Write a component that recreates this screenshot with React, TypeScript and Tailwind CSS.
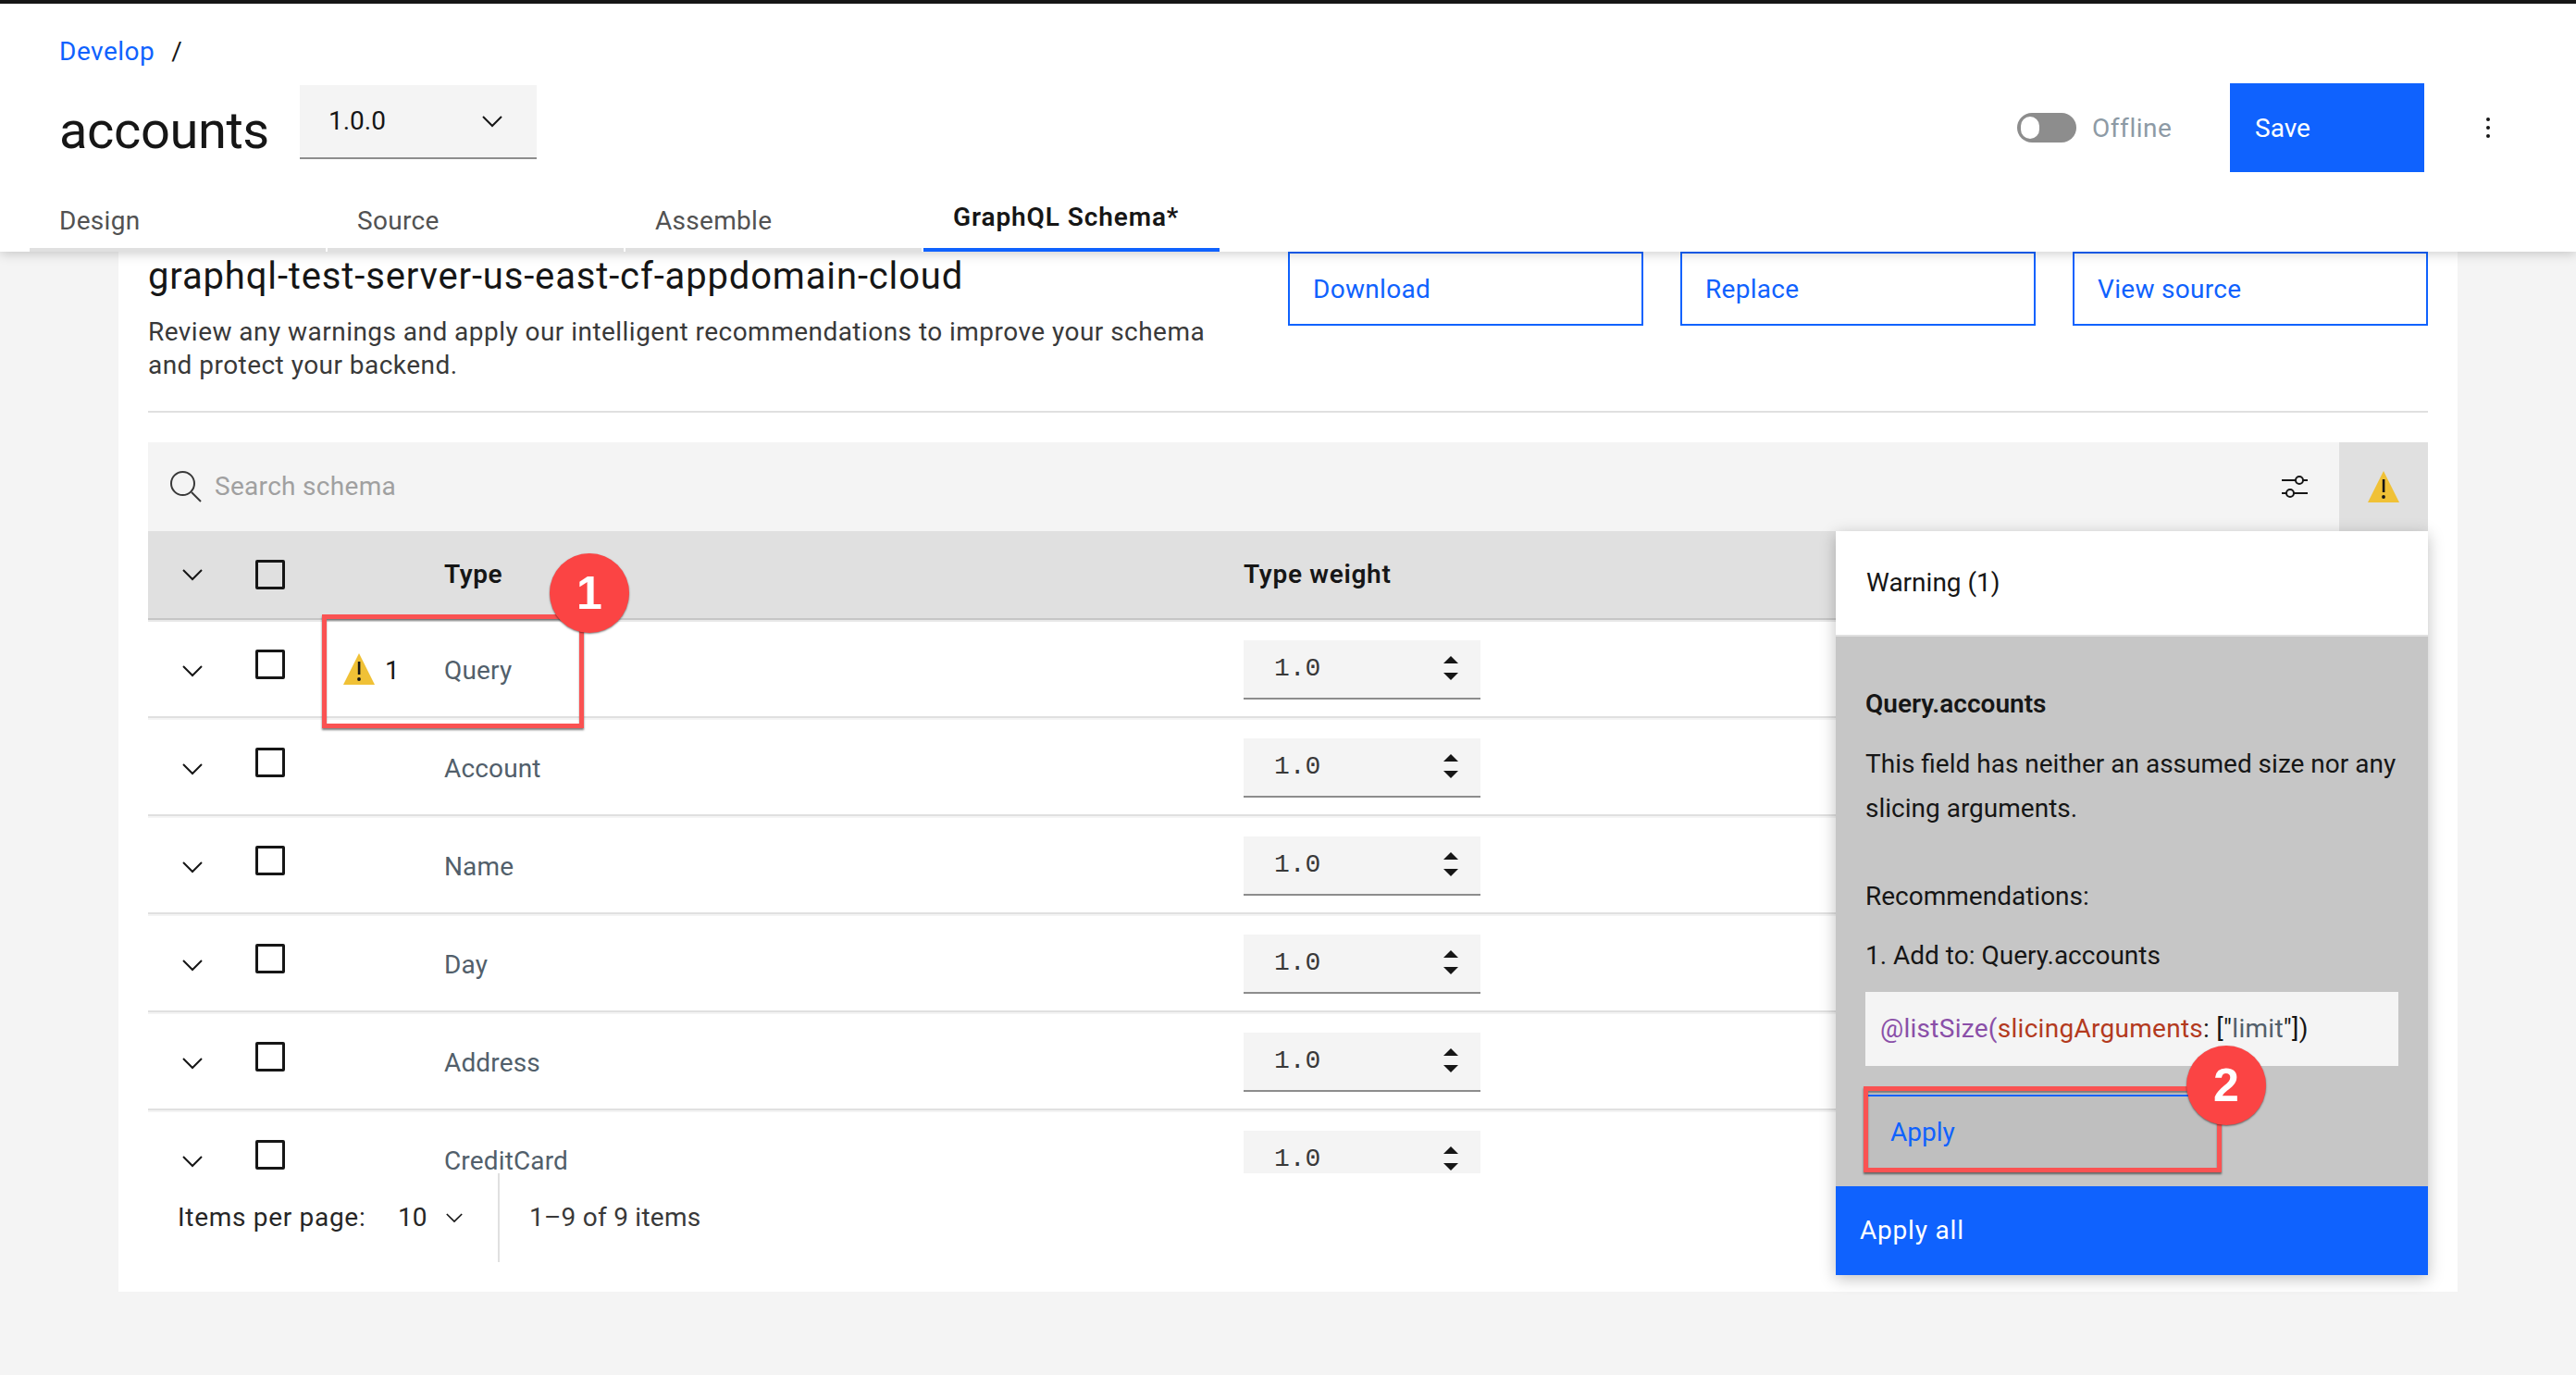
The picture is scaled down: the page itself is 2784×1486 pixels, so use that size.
const sans = "font-['Roboto','Noto_Sans',sans-serif]";

function Chevron({ className = "" }: { className?: string }) {
  return (
    <svg className={className} width="22" height="13" viewBox="0 0 22 13" fill="none">
      <path d="M1 1l10 10L21 1" stroke="#161616" strokeWidth="2" />
    </svg>
  );
}

function Warn({ size = 36 }: { size?: number }) {
  return (
    <svg width={size} height={size} viewBox="0 0 36 36">
      <path d="M18 1L35 35H1z" fill="#f0c136" />
      <rect x="16.8" y="10" width="2.6" height="14" fill="#161616" />
      <circle cx="18" cy="29" r="1.9" fill="#161616" />
    </svg>
  );
}

function Checkbox() {
  return <div className="w-8 h-8 border-[3px] border-[#161616] rounded-[2px] bg-transparent" />;
}

function Stepper() {
  return (
    <svg width="18" height="28" viewBox="0 0 18 28">
      <path d="M9 0l8 8H1z" fill="#161616" />
      <path d="M1 18h16l-8 8z" fill="#161616" />
    </svg>
  );
}

function Row({ name, warn }: { name: string; warn?: boolean }) {
  return (
    <div className="h-[106px] shrink-0 flex items-center pt-[6px] border-b-2 border-[#e0e0e0] shadow-[0_2px_0_#f4f4f4]">
      <div className="w-[96px] flex justify-center"><Chevron /></div>
      <div className="w-[112px] flex pl-[20px] mb-[14px]"><Checkbox /></div>
      <div className="w-[112px] flex items-center pl-[2px]">
        {warn && (
          <>
            <div className="mb-[4px]"><Warn /></div>
            <span className="ml-[10px] text-[28px] text-[#161616]">1</span>
          </>
        )}
      </div>
      <div className="w-[864px] text-[28px] text-[#525f6b] tracking-[0.15px]">{name}</div>
      <div className="w-[256px] h-[64px] mb-[2px] bg-[#f4f4f4] border-b-2 border-[#8d8d8d] flex items-center justify-between pl-[33px] pr-[23px]">
        <span className="font-['Liberation_Mono',monospace] text-[28px] text-[#393939]">1.0</span>
        <Stepper />
      </div>
    </div>
  );
}

function Callout({ n, className }: { n: string; className: string }) {
  return (
    <div className={`absolute w-[86px] h-[86px] rounded-full bg-[#fb4444] shadow-[0_1px_2px_rgba(0,0,0,0.5)] flex items-center justify-center text-white text-[50px] font-bold font-['Liberation_Sans',sans-serif] z-30 ${className}`}>
      {n}
    </div>
  );
}

export default function App() {
  const tabs = ["Design", "Source", "Assemble"];
  const rows = ["Account", "Name", "Day", "Address", "CreditCard"];
  return (
    <div className={`relative w-[2784px] h-[1486px] bg-[#f4f4f4] overflow-hidden ${sans} text-[#161616]`}>
      <header className="relative z-10 h-[272px] bg-white border-t-4 border-[#161616] shadow-[0_2px_12px_rgba(0,0,0,0.2)] flex flex-col">
        <div className="pl-[64px] pt-[34px] text-[28px] leading-[36px] flex gap-[18px] tracking-[0.5px]">
          <span className="text-[#0f62fe]">Develop</span>
          <span>/</span>
        </div>
        <div className="flex items-start pl-[64px] pr-[26px] mt-[-1px]">
          <h1 className="w-[260px] text-[56px] leading-[72px] mt-[32px] font-normal tracking-[-0.4px]">accounts</h1>
          <div className="w-[256px] h-[80px] mt-[19px] bg-[#f4f4f4] border-b-2 border-[#8d8d8d] flex items-center justify-between pl-[31px] pr-[37px] text-[28px]">
            <span>1.0.0</span>
            <Chevron />
          </div>
          <div className="ml-auto flex items-center mt-[17px]">
            <div className="w-[64px] h-[32px] rounded-full bg-[#8d8d8d] flex items-center pl-[4px]">
              <div className="w-[20px] h-[24px] rounded-full bg-white" />
            </div>
            <span className="ml-[17px] w-[149px] pt-[2px] text-[28px] text-[#8d9aa5] tracking-[0.55px]">Offline</span>
            <div className="w-[210px] h-[96px] bg-[#0f62fe] text-white text-[28px] flex items-center pl-[27px] pt-[2px]">Save</div>
            <div className="w-[138px] flex flex-col items-center gap-[5px]">
              <i className="w-[4px] h-[4px] rounded-full bg-[#161616]" />
              <i className="w-[4px] h-[4px] rounded-full bg-[#161616]" />
              <i className="w-[4px] h-[4px] rounded-full bg-[#161616]" />
            </div>
          </div>
        </div>
        <div className="mt-auto flex pl-[32px] gap-[2px]">
          {tabs.map((t) => (
            <div key={t} className="w-[320px] h-[56px] pl-[32px] border-b-4 border-[#e0e0e0] text-[28px] leading-[46px] text-[#525252] tracking-[0.3px]">{t}</div>
          ))}
          <div className="w-[320px] h-[56px] pl-[32px] border-b-4 border-[#0f62fe] text-[28px] font-semibold leading-[38px] tracking-[0.9px]">GraphQL Schema*</div>
        </div>
      </header>

      <main className="relative ml-[128px] w-[2528px] h-[1124px] bg-white px-[32px]">
        <div className="h-[172px] border-b-2 border-[#e0e0e0] flex justify-between items-start box-content">
          <div className="w-[1180px]">
            <h2 className="text-[40px] leading-[52px] mt-[1px] font-normal tracking-[0.85px]">graphql-test-server-us-east-cf-appdomain-cloud</h2>
            <p className="text-[28px] leading-[36px] mt-[16px] text-[#393939] tracking-[0.46px]">Review any warnings and apply our intelligent recommendations to improve your schema and protect your backend.</p>
          </div>
          <div className="flex gap-[40px]">
            {["Download", "Replace", "View source"].map((b) => (
              <div key={b} className="w-[384px] h-[80px] border-2 border-[#0f62fe] text-[#0f62fe] text-[28px] flex items-center pl-[25px] pt-[2px] tracking-[0.3px]">{b}</div>
            ))}
          </div>
        </div>

        <div className="mt-[32px] h-[96px] bg-[#f4f4f4] flex items-center pl-[24px]">
          <svg width="34" height="34" viewBox="0 0 34 34" fill="none" stroke="#393939" strokeWidth="2">
            <circle cx="13.5" cy="13.5" r="12.5" />
            <path d="M23 23l10 10" />
          </svg>
          <span className="ml-[14px] text-[28px] text-[#a0a0a0] tracking-[0.3px]">Search schema</span>
          <svg className="ml-auto mr-[34px]" width="28" height="24" viewBox="0 0 28 24" fill="none" stroke="#161616" strokeWidth="2">
            <path d="M0 5h15M23 5h5M0 19h5M13 19h15" />
            <circle cx="19" cy="5" r="4" fill="#f4f4f4" />
            <circle cx="9" cy="19" r="4" fill="#f4f4f4" />
          </svg>
          <div className="w-[96px] h-[96px] bg-[#e0e0e0] flex items-center justify-center"><Warn /></div>
        </div>

        <div className="h-[694px] overflow-hidden flex flex-col">
          <div className="h-[96px] shrink-0 bg-[#e0e0e0] border-b-2 border-[#c6c6c6] shadow-[0_2px_0_#e8e8e8] flex items-center">
            <div className="w-[96px] flex justify-center"><Chevron /></div>
            <div className="w-[112px] flex pl-[20px]"><Checkbox /></div>
            <div className="w-[112px]" />
            <div className="w-[864px] text-[28px] font-semibold tracking-[0.6px]">Type</div>
            <div className="text-[28px] font-semibold tracking-[0.7px]">Type weight</div>
          </div>
          <Row name="Query" warn />
          {rows.map((r) => <Row key={r} name={r} />)}
        </div>

        <div className="h-[96px] flex items-center text-[28px] text-[#262626]">
          <span className="ml-[32px] w-[238px] tracking-[0.7px]">Items per page:</span>
          <span className="w-[52px]">10</span>
          <Chevron className="w-[18px]" />
          <div className="ml-[38px] w-[2px] h-[96px] bg-[#e0e0e0]" />
          <span className="ml-[32px] text-[#393939] tracking-[0.25px]">1–9 of 9 items</span>
        </div>

        <aside className="absolute z-20 left-[1856px] top-[302px] w-[640px] h-[804px] shadow-[0_4px_16px_rgba(0,0,0,0.25)] flex flex-col">
          <div className="h-[114px] bg-white border-b-2 border-[#e0e0e0] flex items-center pl-[33px] text-[28px]">Warning (1)</div>
          <div className="flex-1 bg-[#c6c6c6] px-[32px] pt-[55px] text-[28px] text-[#161616] flex flex-col">
            <div className="font-semibold leading-[36px]">Query.accounts</div>
            <p className="leading-[48px] mt-[23px]">This field has neither an assumed size nor any slicing arguments.</p>
            <p className="leading-[48px] mt-[47px]">Recommendations:</p>
            <p className="leading-[48px] mt-[16px]">1. Add to: Query.accounts</p>
            <div className="h-[80px] bg-[#f4f4f4] mt-[15px] flex items-center pl-[16px] whitespace-pre tracking-[0.28px]">
              <span className="text-[#8a4fa8]">@listSize(</span>
              <span className="text-[#b33a1e]">slicingArguments</span>
              <span>: [&quot;</span>
              <span className="text-[#525f6b]">limit</span>
              <span>&quot;])</span>
            </div>
            <div className="h-[80px] w-[380px] mt-[31px] bg-[#bfbfbf] border-t-2 border-[#0f62fe] flex items-center pl-[27px] text-[#0f62fe]">Apply</div>
          </div>
          <div className="h-[96px] bg-[#0f62fe] text-white text-[28px] flex items-center pl-[26px] tracking-[0.8px]">Apply all</div>
        </aside>
      </main>

      <div className="absolute z-20 left-[348px] top-[664px] w-[283px] h-[123px] border-[5px] border-[#fa5252] shadow-[0_2px_2px_rgba(0,0,0,0.5),inset_0_2px_2px_rgba(0,0,0,0.4)]" />
      <Callout n="1" className="left-[594px] top-[598px]" />
      <div className="absolute z-20 left-[2014px] top-[1174px] w-[387px] h-[93px] border-[5px] border-[#fa5252] shadow-[0_2px_2px_rgba(0,0,0,0.5),inset_0_2px_2px_rgba(0,0,0,0.4)]" />
      <Callout n="2" className="left-[2363px] top-[1130px]" />
    </div>
  );
}
